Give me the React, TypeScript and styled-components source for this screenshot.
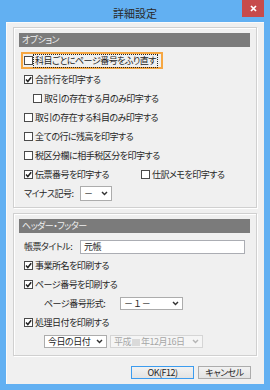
import styled, { createGlobalStyle } from "styled-components";

const GlobalStyle = createGlobalStyle`
  html, body {
    margin: 0;
    padding: 0;
  }
  body {
    font-family: "Noto Sans CJK JP", "Noto Sans", sans-serif;
    font-size: 9px;
    letter-spacing: -0.5px;
    color: #262626;
    font-feature-settings: "palt" 1;
  }
`;

const Chevron = ({ color = "#333" }: { color?: string }) => (
  <svg width="7" height="5" viewBox="0 0 7 5">
    <path d="M1 1 L3.5 3.6 L6 1" stroke={color} strokeWidth="1.4" fill="none" />
  </svg>
);

const CheckMark = () => (
  <svg width="7" height="7" viewBox="0 0 7 7">
    <path d="M1 3.6 L2.8 5.5 L6.2 1.2" stroke="#222" strokeWidth="1.5" fill="none" />
  </svg>
);

const CheckItem = ({
  label,
  checked,
  focused,
  width,
}: {
  label: string;
  checked?: boolean;
  focused?: boolean;
  width?: number;
}) => (
  <CheckWrap width={width}>
    <Box>{checked && <CheckMark />}</Box>
    <CheckLabel focused={focused}>{label}</CheckLabel>
  </CheckWrap>
);

const App = () => {
  return (
    <>
      <GlobalStyle />
      <Window>
        <TitleBar>
          <span />
          <Title>詳細設定</Title>
          <CloseButton>
            <svg width="7" height="7" viewBox="0 0 7 7">
              <path d="M1 1 L6 6 M6 1 L1 6" stroke="#fff" strokeWidth="1.7" />
            </svg>
          </CloseButton>
        </TitleBar>
        <Client>
          <GroupBox>
            <GroupHeader>オプション</GroupHeader>
            <Row>
              <Highlight>
                <CheckItem label="科目ごとにページ番号をふり直す" focused />
              </Highlight>
            </Row>
            <Row>
              <CheckItem label="合計行を印字する" checked />
            </Row>
            <Row indent={9}>
              <CheckItem label="取引の存在する月のみ印字する" />
            </Row>
            <Row>
              <CheckItem label="取引の存在する科目のみ印字する" />
            </Row>
            <Row>
              <CheckItem label="全ての行に残高を印字する" />
            </Row>
            <Row>
              <CheckItem label="税区分欄に相手税区分を印字する" />
            </Row>
            <Row>
              <CheckItem label="伝票番号を印字する" checked width={117} />
              <CheckItem label="仕訳メモを印字する" />
            </Row>
            <Row>
              <FieldLabel width={56}>マイナス記号:</FieldLabel>
              <Select width={32} height={15}>
                <span>－</span>
                <Chevron />
              </Select>
            </Row>
          </GroupBox>

          <GroupBox>
            <GroupHeader>ヘッダー・フッター</GroupHeader>
            <Row>
              <FieldLabel width={56}>帳票タイトル:</FieldLabel>
              <TextInput>元帳</TextInput>
            </Row>
            <Row>
              <CheckItem label="事業所名を印刷する" checked />
            </Row>
            <Row>
              <CheckItem label="ページ番号を印刷する" checked />
            </Row>
            <Row indent={20}>
              <FieldLabel width={76}>ページ番号形式:</FieldLabel>
              <Select width={63} height={13}>
                <span>－ １ －</span>
                <Chevron />
              </Select>
            </Row>
            <Row>
              <CheckItem label="処理日付を印刷する" checked />
            </Row>
            <Row indent={20}>
              <DateRow>
                <Select width={63} height={13}>
                  <span>今日の日付</span>
                  <Chevron />
                </Select>
                <Select width={93} height={13} disabled>
                  <span>
                    平成<Masked />年12月16日
                  </span>
                  <Chevron color="#b5b5b5" />
                </Select>
              </DateRow>
            </Row>
          </GroupBox>

          <Footer>
            <Button width={63} primary>
              OK(F12)
            </Button>
            <Button width={53}>キャンセル</Button>
          </Footer>
        </Client>
      </Window>
    </>
  );
};

export default App;

const Window = styled.div`
  width: 270px;
  height: 390px;
  box-sizing: border-box;
  background: #62b0f2;
  padding: 0 6px 6px;
  display: flex;
  flex-direction: column;
`;

const TitleBar = styled.div`
  height: 22px;
  display: grid;
  grid-template-columns: 1fr auto 1fr;
  align-items: start;
`;

const Title = styled.div`
  font-size: 11px;
  line-height: 14px;
  padding-top: 6px;
  color: #2a2a2a;
  letter-spacing: 0;
  font-feature-settings: normal;
`;

const CloseButton = styled.div`
  justify-self: end;
  width: 22px;
  height: 17px;
  background: #c74b4c;
  display: flex;
  align-items: center;
  justify-content: center;
`;

const Client = styled.div`
  flex: 1;
  background: #f0f0f0;
  box-shadow: inset 1px 1px 0 #fbfbfb;
  padding: 5px 7px 5px;
  display: flex;
  flex-direction: column;
  gap: 5px;
`;

const GroupBox = styled.div`
  border: 1px solid #d0d0d0;
  box-shadow: inset 1px 1px 0 #ffffff, 1px 1px 0 #ffffff;
  padding: 5px 6px 4px 5px;
  display: flex;
  flex-direction: column;
`;

const GroupHeader = styled.div`
  height: 14px;
  line-height: 14px;
  background: #7b7b7b;
  color: #eeeeee;
  padding-left: 3px;
  margin-bottom: 4px;
`;

const Row = styled.div<{ indent?: number }>`
  height: 19px;
  display: flex;
  align-items: center;
  padding-left: ${(p) => 5 + (p.indent || 0)}px;
`;

const Highlight = styled.div`
  margin-left: -3px;
  width: 142px;
  height: 17px;
  box-sizing: border-box;
  border: 2px solid #f6a742;
  display: flex;
  align-items: center;
  padding-left: 1px;
`;

const CheckWrap = styled.div<{ width?: number }>`
  display: flex;
  align-items: center;
  gap: 1px;
  width: ${(p) => (p.width ? `${p.width}px` : "auto")};
  flex-shrink: 0;
`;

const Box = styled.div`
  width: 9px;
  height: 9px;
  box-sizing: border-box;
  border: 1px solid #4a4a4a;
  background: #ffffff;
  display: flex;
  align-items: center;
  justify-content: center;
`;

const CheckLabel = styled.span<{ focused?: boolean }>`
  line-height: 12px;
  padding: 0 1px;
  outline: ${(p) => (p.focused ? "1px dotted #222" : "none")};
  white-space: nowrap;
`;

const FieldLabel = styled.span<{ width: number }>`
  width: ${(p) => p.width}px;
  flex-shrink: 0;
  white-space: nowrap;
`;

const Select = styled.div<{ width: number; height: number; disabled?: boolean }>`
  width: ${(p) => p.width}px;
  height: ${(p) => p.height}px;
  box-sizing: border-box;
  border: 1px solid ${(p) => (p.disabled ? "#d5d5d5" : "#acacac")};
  background: ${(p) => (p.disabled ? "#f5f5f5" : "#ffffff")};
  color: ${(p) => (p.disabled ? "#a6a6a6" : "#262626")};
  display: flex;
  align-items: center;
  justify-content: space-between;
  padding: 0 3px 0 3px;
  white-space: nowrap;
`;

const Masked = styled.span`
  display: inline-block;
  width: 8px;
  height: 7px;
  background: #dadada;
  margin: 0 1px;
  vertical-align: -1px;
`;

const DateRow = styled.div`
  display: flex;
  gap: 3px;
`;

const TextInput = styled.div`
  width: 165px;
  height: 14px;
  box-sizing: border-box;
  border: 1px solid #abadb3;
  background: #ffffff;
  padding-left: 3px;
  line-height: 12px;
`;

const Footer = styled.div`
  margin-top: auto;
  display: flex;
  justify-content: flex-end;
  gap: 4px;
  padding-right: 6px;
`;

const Button = styled.div<{ width: number; primary?: boolean }>`
  width: ${(p) => p.width}px;
  height: 13px;
  box-sizing: border-box;
  border: 1px solid ${(p) => (p.primary ? "#3c9cef" : "#acacac")};
  background: linear-gradient(#f2f2f2, #e3e3e3);
  display: flex;
  align-items: center;
  justify-content: center;
  font-size: 9px;
`;
